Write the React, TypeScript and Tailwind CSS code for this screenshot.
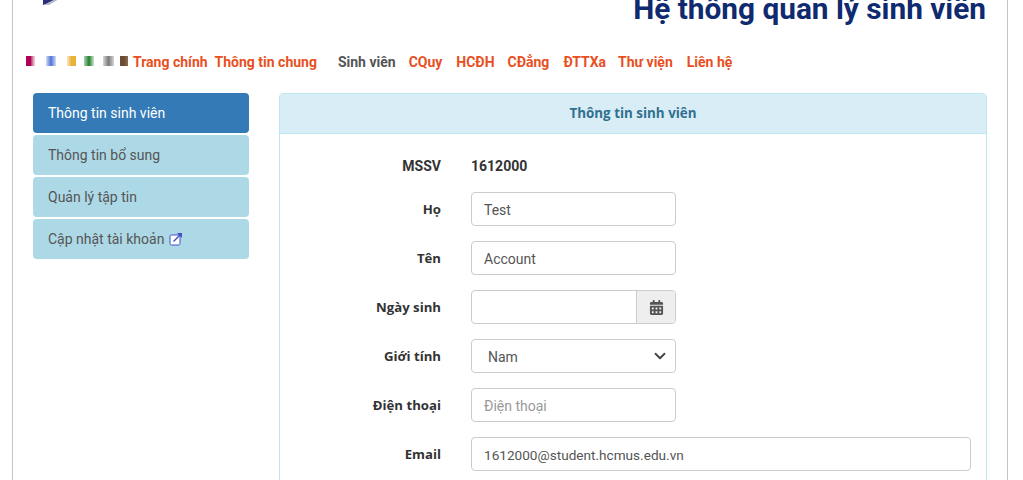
import { ChevronDown } from "lucide-react";
import { FaCalendarAlt } from "react-icons/fa";

const swatches = [
  "ml-0 w-[9px] from-[#b0005a] via-[#b0005a] to-[#f6dce8]",
  "ml-[11px] w-[10px] from-[#d5dcf5] via-[#5470d6] to-[#d5dcf5]",
  "ml-[11px] w-[9px] from-[#f8e6bd] via-[#e9b234] to-[#e9b234]",
  "ml-[8px] w-[10px] from-[#a9d3b2] via-[#17812b] to-[#d0e6d5]",
  "ml-[9px] w-[11px] from-[#d8d8d8] via-[#7b7b7b] to-[#d8d8d8]",
  "ml-[6px] w-[8px] from-[#6d4c30] via-[#6d4c30] to-[#8a6f58]",
];

const navLinks = [
  { label: "Trang chính", cls: "ml-[5px] text-[#e8501f]" },
  { label: "Thông tin chung", cls: "ml-[7px] text-[#e8501f]" },
  { label: "Sinh viên", cls: "ml-[21px] text-[#555555]" },
  { label: "CQuy", cls: "ml-[13px] text-[#e8501f]" },
  { label: "HCĐH", cls: "ml-[14px] text-[#e8501f]" },
  { label: "CĐẳng", cls: "ml-[13px] text-[#e8501f]" },
  { label: "ĐTTXa", cls: "ml-[14px] text-[#e8501f]" },
  { label: "Thư viện", cls: "ml-[12px] text-[#e8501f]" },
  { label: "Liên hệ", cls: "ml-[14px] text-[#e8501f]" },
];

const sideItems = ["Thông tin bổ sung", "Quản lý tập tin"];

function Label({ children }: { children: string }) {
  return <label className="w-[161px] shrink-0 pt-px text-right font-['Open_Sans',sans-serif] text-[13.2px] font-bold text-[#333333]">{children}</label>;
}

function TextRow({ label, value, placeholder, wide }: { label: string; value?: string; placeholder?: string; wide?: boolean }) {
  return (
    <div className="flex h-[34px] items-center">
      <Label>{label}</Label>
      <div className={`ml-[30px] flex h-[34px] items-center rounded border border-[#cccccc] px-3 pt-[3px] ${wide ? "w-[500px] text-[13.6px]" : "w-[205px] text-[14px]"} ${value ? "text-[#555555]" : "text-[#999999]"}`}>
        {value ?? placeholder}
      </div>
    </div>
  );
}

function ExternalIcon() {
  return (
    <svg className="ml-[5px]" width="14" height="14" viewBox="0 0 14 14" fill="none">
      <rect x="1" y="3" width="10" height="10" rx="1.5" fill="#ffffff" stroke="#3f51c9" strokeWidth="1" />
      <path d="M4.5 9.5 11 3" stroke="#3f51c9" strokeWidth="1.4" />
      <path d="M8 1h5v5z" fill="#3f51c9" />
    </svg>
  );
}

export default function App() {
  return (
    <div className="h-[480px] w-[1023px] overflow-hidden bg-white font-['Roboto','Noto_Sans',sans-serif]">
      <div className="ml-3 h-[480px] w-[996px] border-x border-[#c4c4c4]">
        {/* header, page is scrolled so the top is cut off */}
        <div className="flex h-[28px] items-end justify-between overflow-hidden pr-[21px] pl-[29px]">
          <svg className="mb-[23px]" width="18" height="6" viewBox="0 0 18 6">
            <path d="M1 0h13L4 5 1 6z" fill="#2b2f80" />
            <path d="M14 0h3L7 6H2z" fill="#b5b5c4" />
          </svg>
          <h1 className="text-[29.8px] leading-[38px] font-bold whitespace-nowrap text-[#0f2a6e]">Hệ thống quản lý sinh viên</h1>
        </div>

        <nav className="mt-[22px] flex h-[22px] items-center pl-[13px] text-[14px] font-bold whitespace-nowrap">
          {swatches.map((s) => (
            <span key={s} className={`h-[10px] bg-gradient-to-r ${s}`} />
          ))}
          {navLinks.map((l) => (
            <a key={l.label} className={`pt-[2px] ${l.cls}`}>{l.label}</a>
          ))}
        </nav>

        <div className="mt-[21px] flex pl-5">
          <aside className="flex w-[216px] shrink-0 flex-col gap-[2px]">
            <a className="flex h-10 items-center rounded bg-[#337ab7] px-[15px] text-[14px] text-white">Thông tin sinh viên</a>
            {sideItems.map((s) => (
              <a key={s} className="flex h-10 items-center rounded bg-[#add8e6] px-[15px] text-[14px] text-[#555555]">{s}</a>
            ))}
            <a className="flex h-10 items-center rounded bg-[#add8e6] px-[15px] text-[14px] text-[#555555]">
              Cập nhật tài khoản
              <ExternalIcon />
            </a>
          </aside>

          <section className="ml-[30px] h-[420px] w-[708px] rounded border border-[#bce8f1]">
            <div className="flex h-10 items-center justify-center rounded-t-[3px] border-b border-[#bce8f1] bg-[#d9edf7] font-['Open_Sans',sans-serif] text-[13.4px] font-bold text-[#31708f]">Thông tin sinh viên</div>
            <div className="flex flex-col gap-[15px] pt-[22px]">
              <div className="mb-[1px] flex h-[20px] items-center pt-px text-[14px] font-bold text-[#333333]">
                <span className="w-[161px] shrink-0 text-right">MSSV</span>
                <span className="ml-[30px]">1612000</span>
              </div>
              <TextRow label="Họ" value="Test" />
              <TextRow label="Tên" value="Account" />
              <div className="flex h-[34px] items-center">
                <Label>Ngày sinh</Label>
                <div className="ml-[30px] flex h-[34px] w-[205px] overflow-hidden rounded border border-[#cccccc]">
                  <div className="flex-1" />
                  <div className="flex w-[39px] items-center justify-center border-l border-[#cccccc] bg-[#eeeeee] text-[#555555]">
                    <FaCalendarAlt size={15} />
                  </div>
                </div>
              </div>
              <div className="flex h-[34px] items-center">
                <Label>Giới tính</Label>
                <div className="ml-[30px] flex h-[34px] w-[205px] items-center justify-between rounded border border-[#cccccc] pr-[6px] pl-4 text-[14px] text-[#555555]">
                  <span className="pt-[2px]">Nam</span>
                  <ChevronDown size={18} strokeWidth={2.5} className="text-[#444444]" />
                </div>
              </div>
              <TextRow label="Điện thoại" placeholder="Điện thoại" />
              <TextRow label="Email" value="1612000@student.hcmus.edu.vn" wide />
            </div>
          </section>
        </div>
      </div>
    </div>
  );
}
